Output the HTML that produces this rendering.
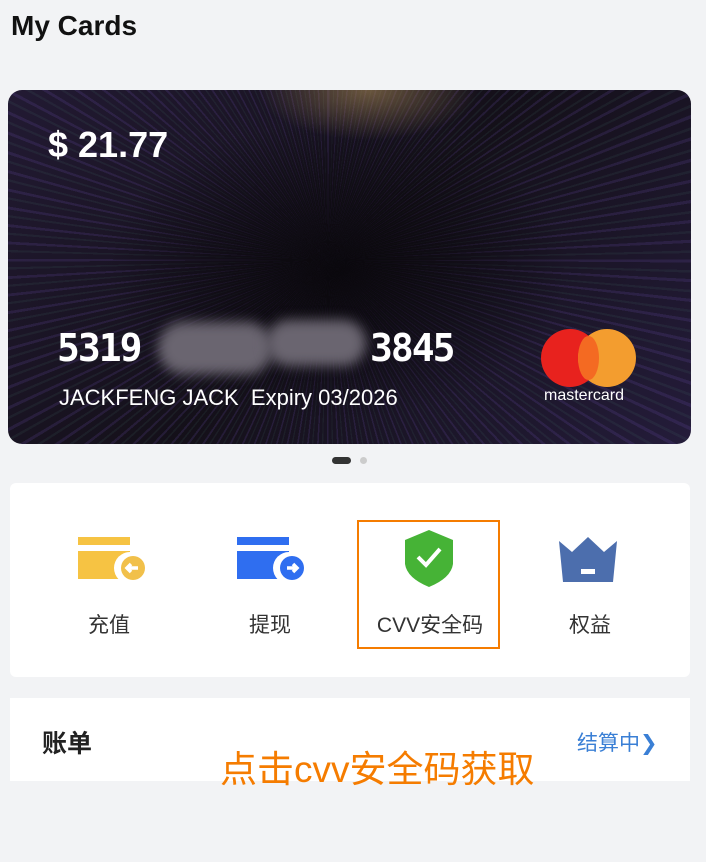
<!DOCTYPE html>
<html><head><meta charset="utf-8"><style>
*{margin:0;padding:0;box-sizing:border-box}
body{width:706px;height:862px;background:#f2f3f5;font-family:"Liberation Sans","Noto Sans CJK SC",sans-serif;position:relative;overflow:hidden}
.t{position:absolute;left:11px;top:10px;font-size:28px;font-weight:bold;color:#111}
.card{position:absolute;left:8px;top:90px;width:683px;height:354px;border-radius:14px;overflow:hidden;
background:
radial-gradient(ellipse 110px 50px at 360px 0px,rgba(160,130,80,.6),transparent),
radial-gradient(ellipse 230px 150px at 330px 180px,rgba(8,6,10,.85),transparent),
repeating-conic-gradient(from 0deg at 320px 170px,rgba(110,80,180,.18) 0deg 0.5deg,transparent 0.5deg 1.7deg,rgba(70,120,110,.12) 1.7deg 2.1deg,transparent 2.1deg 3.1deg),
linear-gradient(135deg,#221a33,#141019 50%,#241c3a);}
.card .w{position:absolute;color:#fff}
.blur{position:absolute;background:#6a6570;filter:blur(6px);border-radius:30px}
.box{position:absolute;left:10px;top:483px;width:680px;height:194px;background:#fff;border-radius:6px}
.it{position:absolute;top:126px;font-size:21px;color:#333;width:160px;text-align:center}
.bill{position:absolute;left:10px;top:698px;width:680px;height:83px;background:#fff}
</style></head><body>
<div class="t">My Cards</div>
<div class="card">
<div class="w" style="left:40px;top:34px;font-size:36px;font-weight:bold">$ 21.77</div>
<div class="w" style="left:49px;top:236px;font-size:38px;font-weight:bold;font-family:'DejaVu Sans Mono',monospace;letter-spacing:-2px">5319</div>
<div class="blur" style="left:150px;top:232px;width:115px;height:52px"></div>
<div class="blur" style="left:258px;top:230px;width:100px;height:46px"></div>
<div class="w" style="left:362px;top:236px;font-size:38px;font-weight:bold;font-family:'DejaVu Sans Mono',monospace;letter-spacing:-2px">3845</div>
<div class="w" style="left:51px;top:295px;font-size:22px">JACKFENG JACK&nbsp; Expiry 03/2026</div>
<div style="position:absolute;left:533px;top:239px;width:58px;height:58px;border-radius:50%;background:#e8221e"></div>
<div style="position:absolute;left:570px;top:239px;width:58px;height:58px;border-radius:50%;background:#f39d2f"></div>
<div style="position:absolute;left:570px;top:246px;width:21px;height:44px;background:#f46a22;border-radius:50%"></div>
<div class="w" style="left:536px;top:297px;font-size:16px">mastercard</div>
</div>
<div style="position:absolute;left:332px;top:457px;width:19px;height:7px;border-radius:4px;background:#333"></div>
<div style="position:absolute;left:360px;top:457px;width:7px;height:7px;border-radius:50%;background:#ccc"></div>
<div class="box">
<svg style="position:absolute;left:68px;top:50px" width="80" height="50"><rect x="0" y="4" width="52" height="8" fill="#f6c343"/><rect x="0" y="18" width="52" height="28" fill="#f6c343"/><circle cx="52" cy="35" r="16" fill="#fff"/><circle cx="55" cy="35" r="12" fill="#f1c04a"/><path d="M49 35h11M53 31l-4 4 4 4" stroke="#fff" stroke-width="3.5" fill="none"/></svg>
<div class="it" style="left:19px">充值</div>
<svg style="position:absolute;left:227px;top:50px" width="80" height="50"><rect x="0" y="4" width="52" height="8" fill="#2f6ef0"/><rect x="0" y="18" width="52" height="28" fill="#2f6ef0"/><circle cx="52" cy="35" r="16" fill="#fff"/><circle cx="55" cy="35" r="12" fill="#2f6ef0"/><path d="M50 35h10M56 31l4 4-4 4" stroke="#fff" stroke-width="3.5" fill="none"/></svg>
<div class="it" style="left:180px">提现</div>
<div style="position:absolute;left:347px;top:37px;width:143px;height:129px;border:2px solid #f57c00"></div>
<svg style="position:absolute;left:395px;top:47px" width="50" height="58"><path d="M24 0L48 10V34Q46 48 24 57Q2 48 0 34V10Z" fill="#46b336"/><path d="M13 27l8 8 14-16" stroke="#fff" stroke-width="4" fill="none"/></svg>
<div class="it" style="left:340px">CVV安全码</div>
<svg style="position:absolute;left:548px;top:52px" width="60" height="50"><path d="M1 6L14 17L30 2L46 17L59 6L55 47H5Z" fill="#4c6ead"/><rect x="23" y="34" width="14" height="5" fill="#fff"/></svg>
<div class="it" style="left:500px">权益</div>
</div>
<div class="bill">
<div style="position:absolute;left:32px;top:26px;font-size:25px;font-weight:bold;color:#222">账单</div>
<div style="position:absolute;left:567px;top:29px;font-size:21px;color:#3a7fd5">结算中❯</div>
<div style="position:absolute;left:210px;top:41px;font-size:37px;color:#f57c00">点击cvv安全码获取</div>
</div>
</body></html>
